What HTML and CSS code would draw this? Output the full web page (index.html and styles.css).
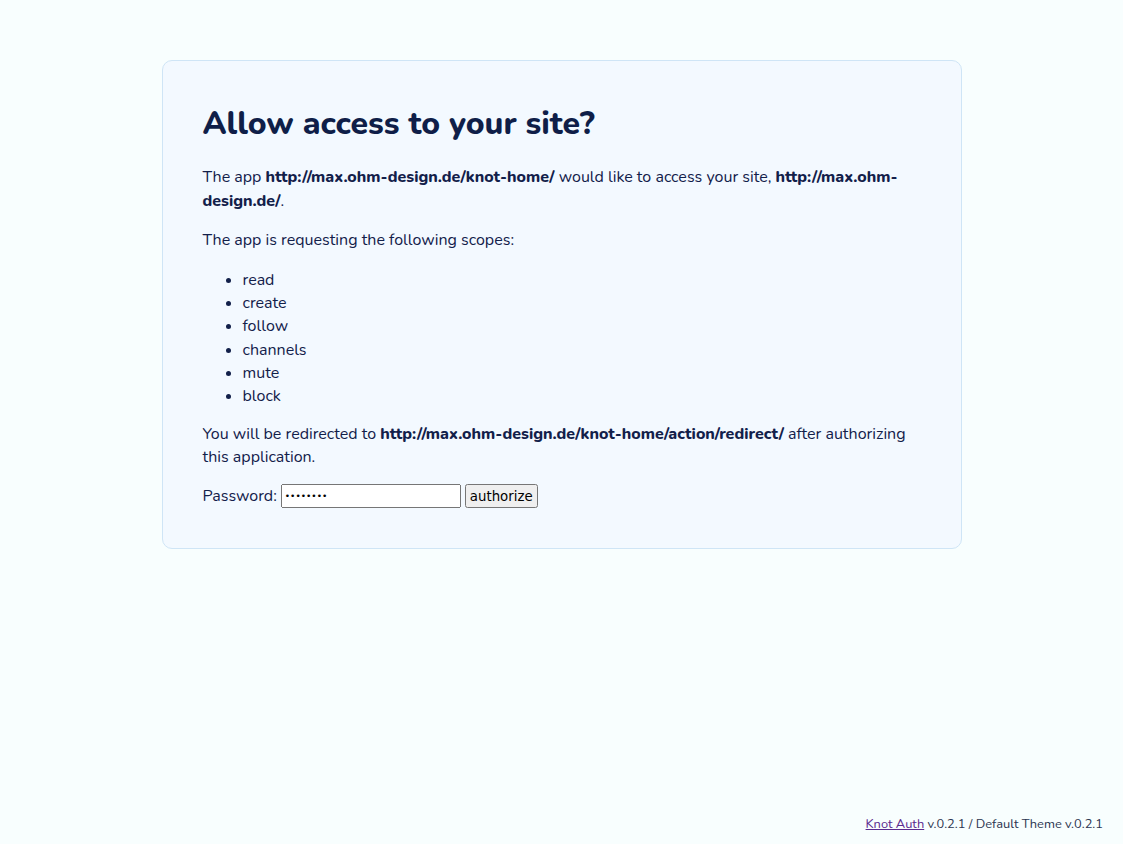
FILE: index.html
```html
<!DOCTYPE html>
<html lang="en">
<head>
<meta charset="utf-8">
<title>Allow access to your site?</title>
<link rel="stylesheet" href="styles.css">
</head>
<body>
<main class="page">
  <section class="card">
    <h1 class="title">Allow access to your site?</h1>
    <p class="text">The app <strong>http://max.ohm-design.de/knot-home/</strong> would like to access your site, <strong>http://max.ohm-design.de/</strong>.</p>
    <p class="text">The app is requesting the following scopes:</p>
    <ul class="scopes">
      <li>read</li>
      <li>create</li>
      <li>follow</li>
      <li>channels</li>
      <li>mute</li>
      <li>block</li>
    </ul>
    <p class="text">You will be redirected to <strong>http://max.ohm-design.de/knot-home/action/redirect/</strong> after authorizing this application.</p>
    <form class="auth-form" onsubmit="return false;">
      <label class="label" for="pw">Password:</label>
      <input class="pw" id="pw" type="password" value="password">
      <button class="btn" type="submit">authorize</button>
    </form>
  </section>
</main>
<footer class="footer">
  <a class="footer-link" href="#">Knot Auth</a> v.0.2.1 / Default Theme v.0.2.1
</footer>
</body>
</html>
```

FILE: styles.css
```css
html, body {
  margin: 0;
  padding: 0;
}
body {
  min-height: 100vh;
  display: flex;
  flex-direction: column;
  background: #f8fefe;
  color: #12204a;
  font-family: Nunito, Lato, "Noto Sans", sans-serif;
  font-size: 16px;
  line-height: 1.45;
}
.page {
  padding-top: 60px;
  display: flex;
  justify-content: center;
}
.card {
  width: 800px;
  box-sizing: border-box;
  padding: 40px;
  background: #f3f9ff;
  border: 1px solid #cfe5f6;
  border-radius: 10px;
}
.title {
  margin: 0 0 19px;
  font-size: 32px;
  font-weight: 800;
  line-height: 1.45;
  color: #0f1e48;
}
.text {
  margin: 0 0 16px;
}
.text strong {
  font-weight: 800;
}
.scopes {
  margin: 0 0 15px;
  padding: 1px 0 0 40px;
}
.auth-form {
  margin: 0;
  display: flex;
  align-items: center;
  gap: 4px;
  margin-top: -1px;
}
.pw {
  width: 180px;
  height: 24px;
  box-sizing: border-box;
  margin: 0;
  font-family: "DejaVu Sans", sans-serif;
  font-size: 9px;
}
.btn {
  height: 24px;
  margin: 0;
  font-family: "DejaVu Sans", sans-serif;
  font-size: 13.33px;
  padding: 1px 3px;
}
.footer {
  margin-top: auto;
  text-align: right;
  padding: 0 20px 10px;
  font-size: 12.85px;
  color: #2c3550;
}
.footer-link {
  color: #5b2a8e;
}
```
